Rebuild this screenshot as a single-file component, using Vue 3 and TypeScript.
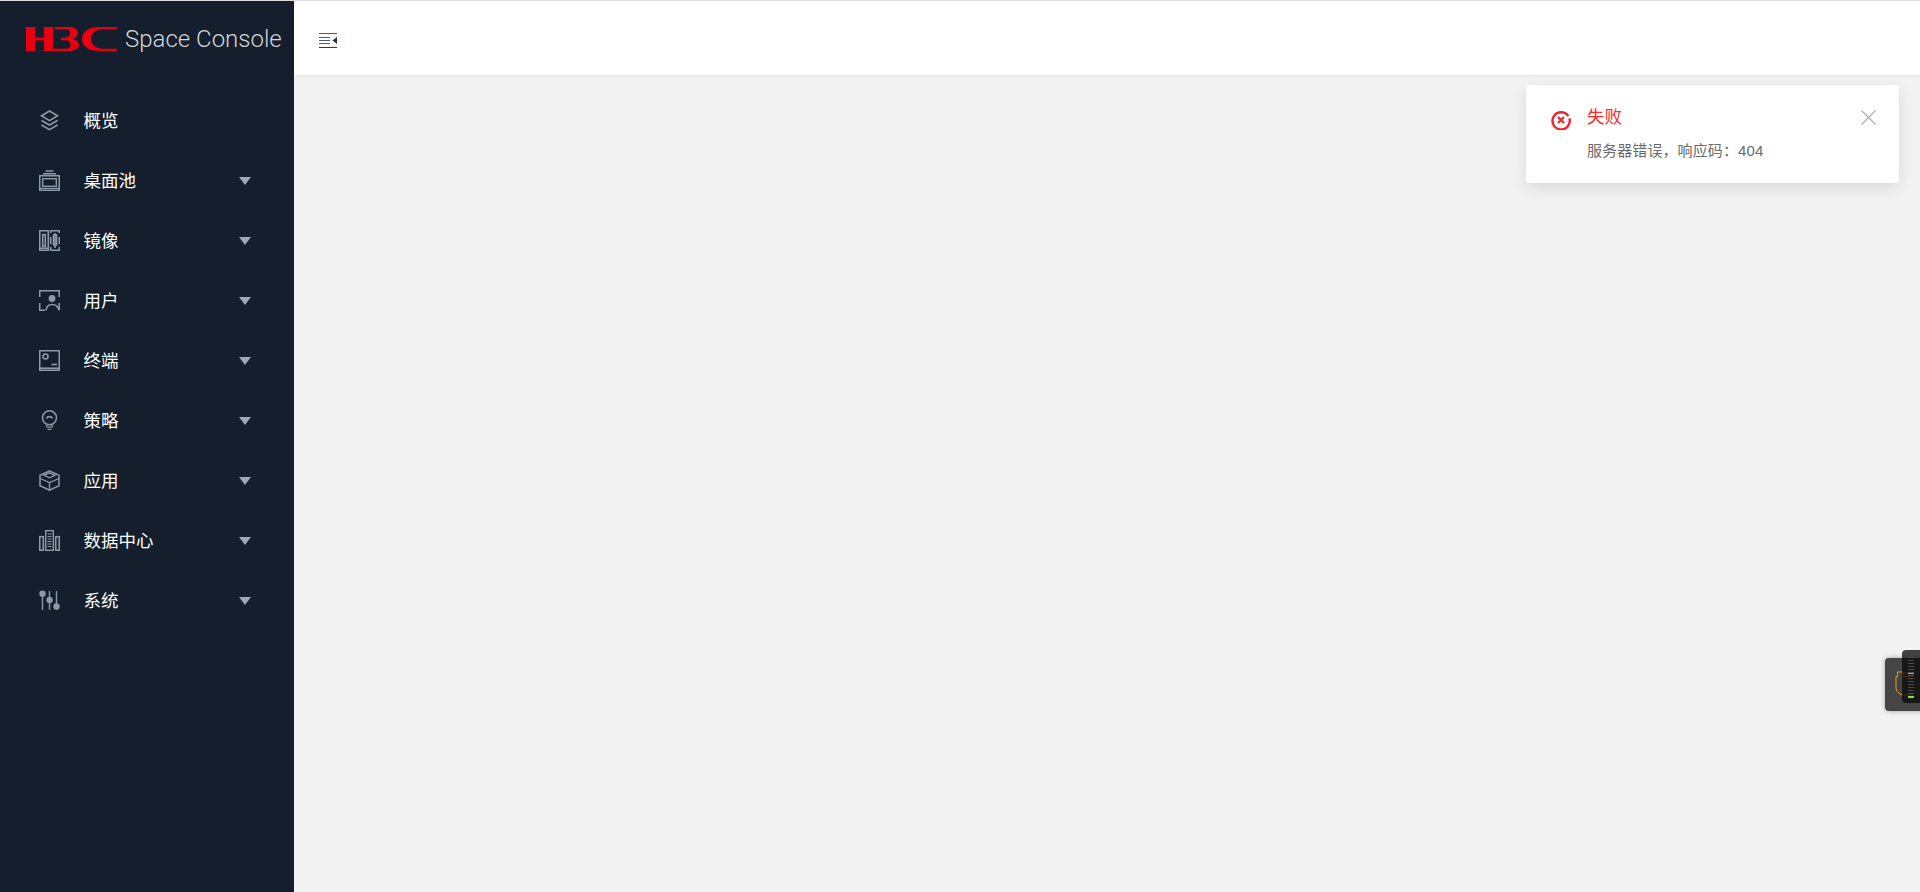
<template>
  <div class="page">
    <aside class="sidebar">
      <div class="brand">
        <svg class="brand__logo" viewBox="0 0 92 24" aria-label="H3C">
          <path fill="#e60012" d="M0 0H11V.8H10V10.6H19V.8H18V0H29V.8H28V23.2H29V24H18V23.2H19V13.4H10V23.2H11V24H0V23.2H1V.8H0Z" />
          <path fill="#e60012" d="M30 0H44C50 0 53 2.6 53 6C53 8.8 51 10.8 47.5 11.8C51 12.6 54 14.8 54 18C54 21.6 50 24 44 24H29V21.8H41C44 21.8 45.5 20.4 45.5 18C45.5 15.3 44 13.2 40 13.2H36V10.6H39.5C43 10.6 45 8.8 45 6.2C45 3.8 43.5 2.2 41 2.2H30Z" />
          <path fill="#e60012" d="M92 0V2.2H78C71.5 2.2 66 6.2 66 12C66 17.8 71.5 21.8 78 21.8H92V24H74C64 24 57 19.6 57 12C57 4.4 64 0 74 0Z" />
        </svg>
        <span class="brand__name">Space Console</span>
      </div>
      <nav class="menu">
        <div v-for="item in menuItems" :key="item.label" class="menu__item">
          <svg class="menu__icon" viewBox="0 0 21 21" fill="none" stroke="currentColor" stroke-width="1.6" v-html="item.icon" />
          <span class="menu__label">{{ item.label }}</span>
          <span v-if="item.hasChildren" class="menu__arrow" />
        </div>
      </nav>
    </aside>

    <div class="main">
      <header class="topbar">
        <svg class="topbar__toggle" viewBox="0 0 18 15">
          <path d="M0 .5H18" stroke="#3a5f86" />
          <path d="M0 4.5H11M0 7.5H11M0 10.5H11" stroke="#555d68" stroke-width="1.2" />
          <path d="M0 14.5H18" stroke="#2c3a4c" />
          <path d="M13.5 7.5L18 4V11Z" fill="#16365c" />
        </svg>
      </header>
      <div class="content" />
    </div>

    <!-- Error notification -->
    <div class="notice">
      <svg class="notice__icon" viewBox="0 0 20 20" fill="none" stroke="#f5222d">
        <path d="M17.4 6.2A8.6 8.6 0 1 0 18.4 8.4" stroke-width="2.4" />
        <path d="M7 7L13 13M13 7L7 13" stroke-width="2.2" />
      </svg>
      <div class="notice__body">
        <div class="notice__title">失败</div>
        <div class="notice__text">服务器错误，响应码：404</div>
      </div>
      <svg class="notice__close" viewBox="0 0 15 15" fill="none" stroke="#a6abb5">
        <path d="M.5 .5L14.5 14.5M14.5 .5L.5 14.5" stroke-width="1.1" />
      </svg>
    </div>

    <!-- Floating widget on the right edge -->
    <div class="widget">
      <svg class="widget__cup" viewBox="0 0 18 26" fill="none" stroke="#e8a020" stroke-width="1">
        <path d="M2.5 6.5H1V17C1 22 5 25 9 25H18" />
        <path d="M2.5 6.5V2H8V6.5H18M8 3H18" />
      </svg>
    </div>
    <div class="meter">
      <span v-for="n in 13" :key="n" class="meter__tick" />
      <span class="meter__peak" />
      <span class="meter__level" />
    </div>
  </div>
</template>

<script setup lang="ts">
interface MenuItem {
  label: string;
  icon: string;
  hasChildren: boolean;
}

const menuItems: MenuItem[] = [
  {
    label: '概览',
    hasChildren: false,
    icon: '<path d="M10.5 1L18.5 5.8L10.5 10.6L2.5 5.8Z"/><path d="M2.5 10.5L10.5 15L18.5 10.5"/><path d="M2.5 15L10.5 19.6L18.5 15"/>',
  },
  {
    label: '桌面池',
    hasChildren: true,
    icon: '<path d="M6.5 1H14.5M4 3.8H17" stroke-width="1.4"/><rect x=".7" y="5.7" width="19.6" height="14.6"/><rect x="3.7" y="8.7" width="13.6" height="7.6" stroke-width="1.4"/><path d="M0 18.4H21" stroke-width="1.2"/>',
  },
  {
    label: '镜像',
    hasChildren: true,
    icon: '<rect x=".7" y=".7" width="8.6" height="19.6"/><rect x="3.7" y="4.7" width="2.6" height="11.6"/><path d="M0 18.2H10" /><path d="M11.7 3V.7H20.3V3M11.7 7V14M20.3 7V14M11.7 17V20.3H20.3V17M16 3V18" stroke-dasharray="none"/><path d="M14.5 5H17.5V15H14.5Z"/>',
  },
  {
    label: '用户',
    hasChildren: true,
    icon: '<path d="M.7 7V.7H20.3V7"/><path d="M.7 13V20.3H6"/><path d="M20.3 13V20.3"/><circle cx="13" cy="8.5" r="3.4" fill="currentColor" stroke="none"/><path d="M7 20.3C7.5 16.5 10 14.5 13 14.5C16 14.5 19 16.5 20 20.3"/>',
  },
  {
    label: '终端',
    hasChildren: true,
    icon: '<rect x=".7" y=".7" width="19.6" height="19.6"/><circle cx="6.5" cy="6.5" r="2.5"/><path d="M12.5 14.5H18" stroke-width="1.6"/><path d="M0 18.2H21" stroke-width="1.6"/>',
  },
  {
    label: '策略',
    hasChildren: true,
    icon: '<circle cx="10.5" cy="7.8" r="7" stroke-width="1.5"/><path d="M7.5 8.5C8.5 6 12.5 6 13.5 8.5" /><path d="M7.5 16.5V15M13.5 16.5V15M7.5 17.2H13.5M8.5 19.4H12.5" stroke-width="1.3"/>',
  },
  {
    label: '应用',
    hasChildren: true,
    icon: '<path d="M10.5 .9L20 5.2V15.8L10.5 20.2L1 15.8V5.2Z" stroke-width="1.5"/><path d="M1 8.5L10.5 12.5L20 8.5M10.5 12.5V20.2M5 5.2L10.5 2.8L16 5.2L10.5 7.8Z" stroke-width="1.3"/>',
  },
  {
    label: '数据中心',
    hasChildren: true,
    icon: '<rect x=".7" y="6.7" width="3.6" height="13.6"/><rect x="6.7" y=".7" width="7.6" height="19.6" stroke-width="1.4"/><rect x="16.7" y="6.7" width="3.6" height="13.6"/><path d="M8.5 4H12.5M8.5 6.5H12.5M8.5 9H12.5M8.5 11.5H12.5M8.5 14H12.5M8.5 16.5H12.5" stroke-width="1"/>',
  },
  {
    label: '系统',
    hasChildren: true,
    icon: '<path d="M3.5 1V20M10.5 1V20M17.5 1V20" stroke-width="1.4"/><circle cx="3.5" cy="3.8" r="3.2" fill="currentColor" stroke="none"/><circle cx="10.5" cy="10" r="3.2" fill="currentColor" stroke="none"/><circle cx="17.5" cy="16.5" r="3.2" fill="currentColor" stroke="none"/>',
  },
];
</script>

<style scoped>
.page {
  position: relative;
  display: flex;
  height: 892px;
  overflow: hidden;
  font-family: "Liberation Sans", "Noto Sans CJK SC", sans-serif;
  background: #f2f2f2;
}

.sidebar {
  flex: 0 0 294px;
  background: #141e2c;
}

.brand {
  display: flex;
  align-items: center;
  gap: 8px;
  height: 75px;
  padding: 1px 0 0 25px;
  box-sizing: border-box;
  border-top: 1px solid #dcdcdc;
}

.brand__logo {
  width: 92px;
  height: 24px;
}

.brand__name {
  font-family: Roboto, "Liberation Sans", sans-serif;
  font-size: 24px;
  font-weight: 300;
  color: #d2d5d9;
  white-space: nowrap;
}

.menu {
  display: flex;
  flex-direction: column;
  padding-top: 15px;
}

.menu__item {
  display: flex;
  align-items: center;
  height: 60px;
  padding-left: 39px;
}

.menu__icon {
  flex: none;
  width: 21px;
  height: 21px;
  color: #8e99a8;
}

.menu__label {
  margin-left: 23.5px;
  padding-bottom: 2px;
  font-size: 17.5px;
  color: #ffffff;
}

.menu__arrow {
  margin-left: auto;
  margin-right: 43px;
  margin-top: 2px;
  width: 0;
  height: 0;
  border-style: solid;
  border-width: 8px 6.5px 0 6.5px;
  border-color: #a0a8b4 transparent transparent transparent;
}

.main {
  flex: 1;
  display: flex;
  flex-direction: column;
}

.topbar {
  display: flex;
  align-items: center;
  height: 75px;
  padding-left: 25px;
  box-sizing: border-box;
  background: #ffffff;
  border-top: 1px solid #dcdcdc;
  box-shadow: 0 1px 3px rgba(0, 0, 0, 0.06);
}

.topbar__toggle {
  width: 18px;
  height: 15px;
  margin-top: 4px;
}

.content {
  flex: 1;
}

.notice {
  position: absolute;
  top: 85px;
  left: 1526px;
  display: flex;
  width: 373px;
  height: 98px;
  box-sizing: border-box;
  padding: 20px 0 0 25px;
  background: #ffffff;
  border-radius: 2px;
  box-shadow: 0 5px 15px rgba(0, 0, 0, 0.1);
}

.notice__icon {
  flex: none;
  width: 20px;
  height: 20px;
  margin-top: 5px;
}

.notice__body {
  margin-left: 16px;
}

.notice__title {
  font-size: 17.5px;
  line-height: 24px;
  color: #ff2a2a;
}

.notice__text {
  margin-top: 11px;
  font-size: 15px;
  line-height: 22px;
  letter-spacing: 0.1px;
  color: #6a6a6a;
}

.notice__close {
  position: absolute;
  top: 25px;
  right: 23px;
  width: 15px;
  height: 15px;
}

.widget {
  position: absolute;
  top: 658px;
  left: 1885px;
  width: 50px;
  height: 53px;
  background: #454545;
  border-radius: 4px;
  box-shadow: 0 0 5px rgba(0, 0, 0, 0.35);
}

.widget__cup {
  position: absolute;
  top: 12px;
  left: 10px;
  width: 18px;
  height: 26px;
}

.meter {
  position: absolute;
  top: 650px;
  left: 1902px;
  display: flex;
  flex-direction: column;
  gap: 2px;
  width: 30px;
  height: 53px;
  padding: 7px 0 0 6px;
  box-sizing: border-box;
  background: rgba(8, 8, 8, 0.75);
  border-radius: 4px;
}

.meter__tick {
  display: block;
  width: 6px;
  height: 1px;
  flex: none;
  background: #4a4a4a;
}

.meter__peak {
  position: absolute;
  left: 6px;
  top: 23px;
  width: 6px;
  height: 1px;
  background: #f0a828;
}

.meter__level {
  position: absolute;
  left: 6px;
  top: 46px;
  width: 6px;
  height: 2px;
  background: #8be030;
}
</style>

<style>
html,
body {
  margin: 0;
  background: #f2f2f2;
}
</style>
